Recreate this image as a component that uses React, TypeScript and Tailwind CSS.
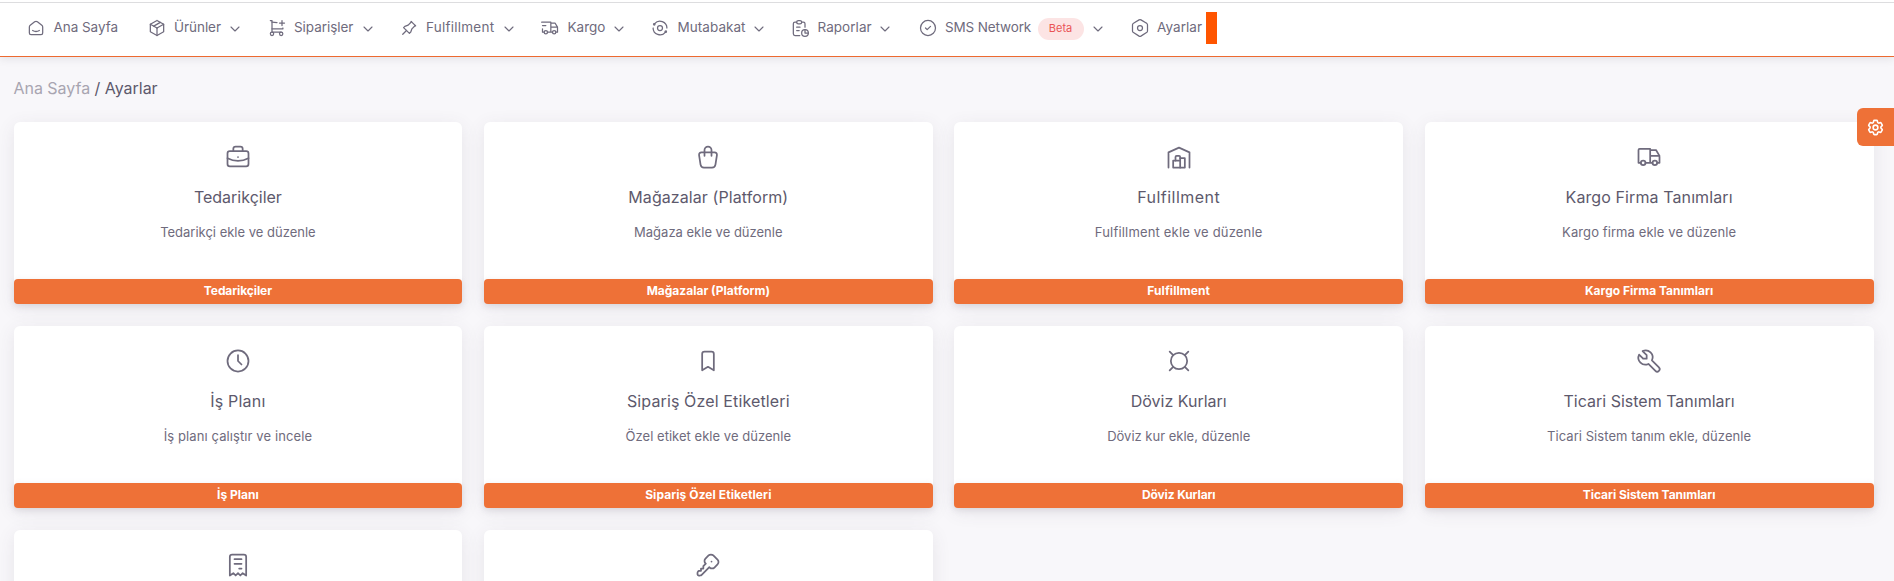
import React from "react";
import { ChevronDown } from "lucide-react";
import { HiOutlineCog6Tooth } from "react-icons/hi2";

const ICONS = {
  home: [
    "M19 8.71l-5.333 -4.148a2.666 2.666 0 0 0 -3.274 0l-5.334 4.148a2.665 2.665 0 0 0 -1.029 2.105v7.2a2 2 0 0 0 2 2h12a2 2 0 0 0 2 -2v-7.2c0 -.823 -.38 -1.6 -1.03 -2.105",
    "M16 15c-2.21 1.333 -5.792 1.333 -8 0",
  ],
  box: ["M12 3l8 4.5v9l-8 4.5l-8 -4.5v-9l8 -4.5", "M12 12l8 -4.5", "M12 12v9", "M12 12l-8 -4.5", "M16 5.25l-8 4.5"],
  cart: [
    "M4 19a2 2 0 1 0 4 0a2 2 0 1 0 -4 0",
    "M15 19a2 2 0 1 0 4 0a2 2 0 1 0 -4 0",
    "M17 17h-11v-14h-2",
    "M6 5l6.005 .429m7.138 6.573l-.143 .998h-13",
    "M15 6h6m-3 -3v6",
  ],
  pin: ["M15 4.5l-4 4l-4 1.5l-1.5 1.5l7 7l1.5 -1.5l1.5 -4l4 -4", "M9 15l-4.5 4.5", "M14.5 4l5.5 5.5"],
  delivery: [
    "M5 17a2 2 0 1 0 4 0a2 2 0 1 0 -4 0",
    "M15 17a2 2 0 1 0 4 0a2 2 0 1 0 -4 0",
    "M5 17h-2v-4m-1 -8h11v12m-4 0h6m4 0h2v-6h-8m0 -5h5l3 5",
    "M3 9h4",
  ],
  exchange: [
    "M9 12a3 3 0 1 0 6 0a3 3 0 1 0 -6 0",
    "M5.6 6.8a8.3 8.3 0 0 1 14.7 5.2",
    "M18.4 17.2a8.3 8.3 0 0 1 -14.7 -5.2",
    "M4.2 7.6a.9 .9 0 1 0 1.8 0a.9 .9 0 1 0 -1.8 0",
    "M18 16.4a.9 .9 0 1 0 1.8 0a.9 .9 0 1 0 -1.8 0",
  ],
  report: [
    "M8 5h-2a2 2 0 0 0 -2 2v12a2 2 0 0 0 2 2h5.697",
    "M18 14v4h4",
    "M18 11v-4a2 2 0 0 0 -2 -2h-2",
    "M8 5a2 2 0 0 1 2 -2h2a2 2 0 0 1 0 4h-2a2 2 0 0 1 -2 -2z",
    "M14 18a4 4 0 1 0 8 0a4 4 0 1 0 -8 0",
    "M8 11h4",
    "M8 15h3",
  ],
  check: ["M3 12a9 9 0 1 0 18 0a9 9 0 1 0 -18 0", "M9 12l2 2l4 -4"],
  hexagon: [
    "M19.875 6.27a2.225 2.225 0 0 1 1.125 1.948v7.284c0 .809 -.443 1.555 -1.158 1.948l-6.75 4.27a2.269 2.269 0 0 1 -2.184 0l-6.75 -4.27a2.225 2.225 0 0 1 -1.158 -1.948v-7.285c0 -.809 .443 -1.554 1.158 -1.947l6.75 -3.98a2.33 2.33 0 0 1 2.25 0l6.75 3.98z",
    "M9 12a3 3 0 1 0 6 0a3 3 0 1 0 -6 0",
  ],
  briefcase: [
    "M3 9a2 2 0 0 1 2 -2h14a2 2 0 0 1 2 2v9a2 2 0 0 1 -2 2h-14a2 2 0 0 1 -2 -2z",
    "M8 7v-2a2 2 0 0 1 2 -2h4a2 2 0 0 1 2 2v2",
    "M12 12v.01",
    "M3 13a20 20 0 0 0 18 0",
  ],
  bag: [
    "M6.331 8h11.339a2 2 0 0 1 1.977 2.304l-1.255 8.152a3 3 0 0 1 -2.966 2.544h-6.852a3 3 0 0 1 -2.965 -2.544l-1.255 -8.152a2 2 0 0 1 1.977 -2.304z",
    "M9 11v-5a3 3 0 0 1 6 0v5",
  ],
  warehouse: ["M3 21v-13l9 -4l9 4v13", "M13 13h4v8h-10v-6h6", "M13 21v-9a1 1 0 0 0 -1 -1h-2a1 1 0 0 0 -1 1v3"],
  truck: [
    "M5 17a2 2 0 1 0 4 0a2 2 0 1 0 -4 0",
    "M15 17a2 2 0 1 0 4 0a2 2 0 1 0 -4 0",
    "M5 17h-2v-11a1 1 0 0 1 1 -1h9v12m-4 0h6m4 0h2v-6h-8m0 -5h5l3 5",
  ],
  clock: ["M3 12a9 9 0 1 0 18 0a9 9 0 1 0 -18 0", "M12 7v5l3 3"],
  bookmark: ["M9 4h6a2 2 0 0 1 2 2v14l-5 -3l-5 3v-14a2 2 0 0 1 2 -2"],
  currency: ["M5 12a7 7 0 1 0 14 0a7 7 0 1 0 -14 0", "M4 4l3 3", "M20 4l-3 3", "M4 20l3 -3", "M20 20l-3 -3"],
  tool: ["M7 10h3v-3l-3.5 -3.5a6 6 0 0 1 8 8l6 6a2 2 0 0 1 -3 3l-6 -6a6 6 0 0 1 -8 -8l3.5 3.5"],
  receipt: ["M5 21v-16a2 2 0 0 1 2 -2h10a2 2 0 0 1 2 2v16l-3 -2l-2 2l-2 -2l-2 2l-2 -2l-3 2m4 -14h6m-6 4h6m-2 4h2"],
  key: [
    "M16.555 3.843l3.602 3.602a2.877 2.877 0 0 1 0 4.069l-2.643 2.643a2.877 2.877 0 0 1 -4.069 0l-.301 -.301l-6.558 6.558a2 2 0 0 1 -1.239 .578l-.175 .008h-1.172a1 1 0 0 1 -.993 -.883l-.007 -.117v-1.172a2 2 0 0 1 .467 -1.284l.119 -.13l.414 -.414h2v-2h2v-2l2.144 -2.144l-.301 -.301a2.877 2.877 0 0 1 0 -4.069l2.643 -2.643a2.877 2.877 0 0 1 4.069 0z",
    "M15 9h.01",
  ],
};

type IconName = keyof typeof ICONS;

function Icon({ name, className }: { name: IconName; className: string }) {
  return (
    <svg
      viewBox="0 0 24 24"
      className={className}
      fill="none"
      stroke="currentColor"
      strokeWidth={1.5}
      strokeLinecap="round"
      strokeLinejoin="round"
    >
      {ICONS[name].map((d) => (
        <path key={d} d={d} />
      ))}
    </svg>
  );
}

type NavEntry = { icon: IconName; label: string; item: string; text: string; badge?: string; menu?: boolean };

const NAV: NavEntry[] = [
  { icon: "home", label: "Ana Sayfa", item: "w-[120.5px]", text: "tracking-[-0.05px]" },
  { icon: "box", label: "Ürünler", item: "w-[120px]", text: "w-[52.5px] tracking-[-0.05px]", menu: true },
  { icon: "cart", label: "Siparişler", item: "w-[132px]", text: "w-[65.5px] tracking-[-0.05px]", menu: true },
  { icon: "pin", label: "Fulfillment", item: "w-[141.5px]", text: "w-[74.5px] tracking-[0.24px]", menu: true },
  { icon: "delivery", label: "Kargo", item: "w-[110px]", text: "w-[43px]", menu: true },
  { icon: "exchange", label: "Mutabakat", item: "w-[140px]", text: "w-[73px] tracking-[0.05px]", menu: true },
  { icon: "report", label: "Raporlar", item: "w-[127.5px]", text: "w-[59px] tracking-[0.05px]", menu: true },
  { icon: "check", label: "SMS Network", item: "w-[212px]", text: "w-[92.5px] tracking-[-0.13px]", badge: "Beta", menu: true },
  { icon: "hexagon", label: "Ayarlar", item: "", text: "w-[48.5px] tracking-[0.06px]" },
];

type Tile = { icon: IconName; title?: string; text?: string; titleClass?: string; textClass?: string; buttonClass?: string };

const TILES: Tile[] = [
  { icon: "briefcase", title: "Tedarikçiler", text: "Tedarikçi ekle ve düzenle", buttonClass: "tracking-[-0.1px]" },
  { icon: "bag", title: "Mağazalar (Platform)", text: "Mağaza ekle ve düzenle", titleClass: "tracking-[0.08px]" },
  { icon: "warehouse", title: "Fulfillment", text: "Fulfillment ekle ve düzenle", titleClass: "tracking-[0.47px]", textClass: "tracking-[0.18px]", buttonClass: "tracking-[0.07px]" },
  { icon: "truck", title: "Kargo Firma Tanımları", text: "Kargo firma ekle ve düzenle", titleClass: "tracking-[0.1px]", textClass: "tracking-[0.09px]" },
  { icon: "clock", title: "İş Planı", text: "İş planı çalıştır ve incele", titleClass: "tracking-[0.2px]", textClass: "tracking-[0.1px]" },
  { icon: "bookmark", title: "Sipariş Özel Etiketleri", text: "Özel etiket ekle ve düzenle", titleClass: "tracking-[0.13px]", textClass: "tracking-[0.03px]", buttonClass: "tracking-[0.08px]" },
  { icon: "currency", title: "Döviz Kurları", text: "Döviz kur ekle, düzenle", buttonClass: "tracking-[-0.13px]" },
  { icon: "tool", title: "Ticari Sistem Tanımları", text: "Ticari Sistem tanım ekle, düzenle", textClass: "tracking-[0.05px]", buttonClass: "tracking-[-0.05px]" },
  { icon: "receipt" },
  { icon: "key" },
];

function NavItem({ icon, label, item, text, badge, menu }: NavEntry) {
  return (
    <a className={`flex shrink-0 items-center ${item}`}>
      <Icon name={icon} className="mr-[7.5px] size-5 shrink-0" />
      <span className={`shrink-0 whitespace-nowrap ${text}`}>{label}</span>
      {badge && (
        <span className="mt-[2px] mr-[6px] flex h-[22px] w-[46px] shrink-0 items-center justify-center rounded-full bg-[#fce4e4] text-[11px] text-[#ea5455]">
          {badge}
        </span>
      )}
      {menu && <ChevronDown className="mt-[3px] size-4 shrink-0" strokeWidth={1.7} />}
    </a>
  );
}

function Card({ icon, title, text, titleClass = "", textClass = "", buttonClass = "" }: Tile) {
  return (
    <section className="flex h-[182px] flex-col items-center rounded-md bg-white pt-[21px] shadow-[0_4px_18px_rgba(75,70,92,0.1)]">
      <Icon name={icon} className="size-7 shrink-0 text-[#6f6b7d]" />
      {title && <h5 className={`mt-[14px] text-base leading-6 text-[#5d596c] ${titleClass}`}>{title}</h5>}
      {text && <p className={`mt-[13px] text-[13px] leading-5 ${textClass}`}>{text}</p>}
      {title && (
        <button
          className={`mt-auto h-[25px] w-full rounded bg-[#ee7137] pb-px text-xs leading-6 font-bold text-white shadow-[0_2px_6px_rgba(165,163,174,0.3)] ${buttonClass}`}
        >
          {title}
        </button>
      )}
    </section>
  );
}

export default function App() {
  return (
    <div className="relative h-[581px] overflow-hidden bg-[#f8f7fa] font-['Inter','Liberation_Sans',sans-serif] text-[#6f6b7d]">
      <header className="border-b border-[#ed6a30] bg-white pt-[2px] shadow-[0_2px_8px_rgba(75,70,92,0.12)]">
        <nav className="flex h-[54px] items-center border-t border-[#dddddf] pb-[4px] pl-[26px] text-[13.5px]">
          {NAV.map((n) => (
            <NavItem key={n.label} {...n} />
          ))}
          <span className="h-[32px] w-[11px] bg-[#ff5500]" />
        </nav>
      </header>
      <main className="pt-[19px] pr-[20.5px] pl-[13.5px]">
        <div className="mb-[22px] text-base leading-6 tracking-[-0.03px] text-[#5d596c]">
          <span className="text-[#a8a5b1]">Ana Sayfa</span> / <span>Ayarlar</span>
        </div>
        <div className="grid grid-cols-4 gap-x-[21.6px] gap-y-[22px]">
          {TILES.map((t) => (
            <Card key={t.icon} {...t} />
          ))}
        </div>
      </main>
      <button className="absolute top-[108px] right-0 flex h-[38px] w-[37px] items-center justify-center rounded-l-md bg-[#ee7137] text-white">
        <HiOutlineCog6Tooth className="size-[19px] stroke-2" />
      </button>
    </div>
  );
}
